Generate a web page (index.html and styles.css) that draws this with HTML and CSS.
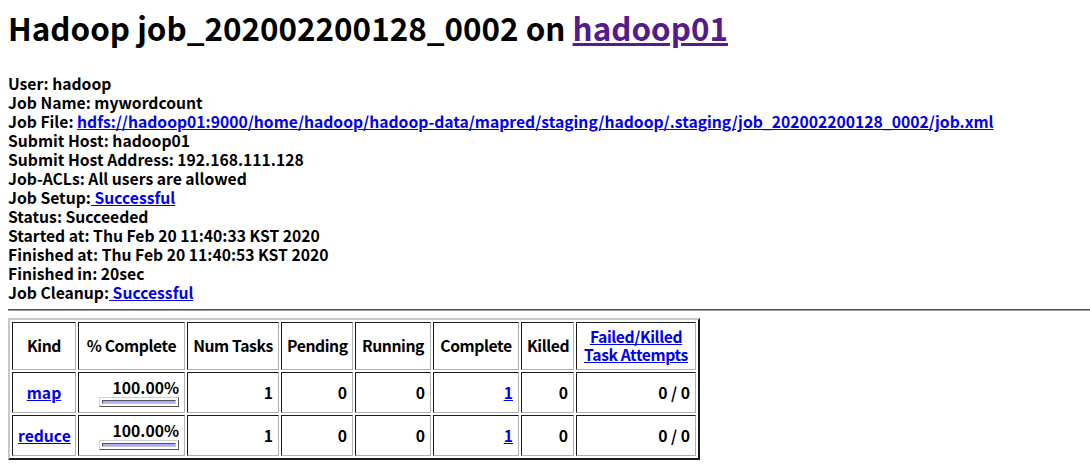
FILE: index.html
```html
<!DOCTYPE html>
<html>
<head>
<meta charset="utf-8">
<title>Hadoop job_202002200128_0002 on hadoop01</title>
<link rel="stylesheet" href="styles.css">
</head>
<body>
<div class="page">
  <h1 class="title">Hadoop job_202002200128_0002 on <a class="visited" href="#">hadoop01</a></h1>
  <div class="info">
    <div>User: hadoop</div>
    <div>Job Name: mywordcount</div>
    <div>Job File: <a href="#">hdfs://hadoop01:9000/home/hadoop/hadoop-data/mapred/staging/hadoop/.staging/job_202002200128_0002/job.xml</a></div>
    <div>Submit Host: hadoop01</div>
    <div>Submit Host Address: 192.168.111.128</div>
    <div>Job-ACLs: All users are allowed</div>
    <div>Job Setup:<a href="#"> Successful</a></div>
    <div>Status: Succeeded</div>
    <div>Started at: Thu Feb 20 11:40:33 KST 2020</div>
    <div>Finished at: Thu Feb 20 11:40:53 KST 2020</div>
    <div>Finished in: 20sec</div>
    <div>Job Cleanup:<a href="#"> Successful</a></div>
  </div>
  <hr class="rule">
  <table class="tasks">
    <thead>
      <tr>
        <th class="c-kind">Kind</th>
        <th class="c-pct">% Complete</th>
        <th class="c-num">Num Tasks</th>
        <th class="c-pend">Pending</th>
        <th class="c-run">Running</th>
        <th class="c-comp">Complete</th>
        <th class="c-kill">Killed</th>
        <th class="c-fail"><a href="#">Failed/Killed<br>Task Attempts</a></th>
      </tr>
    </thead>
    <tbody>
      <tr>
        <td class="kind"><a href="#">map</a></td>
        <td class="num"><div class="pct">100.00%</div><div class="bar"><div class="fill"></div></div></td>
        <td class="num">1</td>
        <td class="num">0</td>
        <td class="num">0</td>
        <td class="num"><a href="#">1</a></td>
        <td class="num">0</td>
        <td class="num">0 / 0</td>
      </tr>
      <tr>
        <td class="kind"><a href="#">reduce</a></td>
        <td class="num"><div class="pct">100.00%</div><div class="bar"><div class="fill"></div></div></td>
        <td class="num">1</td>
        <td class="num">0</td>
        <td class="num">0</td>
        <td class="num"><a href="#">1</a></td>
        <td class="num">0</td>
        <td class="num">0 / 0</td>
      </tr>
    </tbody>
  </table>
</div>
</body>
</html>
```
FILE: styles.css
```css
html, body {
  margin: 0;
  padding: 0;
  background: #ffffff;
}
body {
  font-family: "Noto Sans CJK KR", "Noto Sans", sans-serif;
  font-weight: 700;
  font-size: 15.7px;
  color: #000000;
}
.page {
  padding: 0 0 0 8px;
}
a {
  color: #0000ee;
  text-decoration: underline;
}
a.visited {
  color: #551a8b;
}
.title {
  font-size: 31.4px;
  line-height: 38px;
  font-weight: 700;
  margin: 9px 0 27px 0;
}
.info {
  line-height: 19px;
  white-space: nowrap;
}
.rule {
  margin: 7px 0 0 0;
  height: 0;
  border: 0;
  border-top: 1px solid #555555;
  border-bottom: 1px solid #9a9a9a;
}
.tasks {
  margin-top: 7px;
  table-layout: fixed;
  width: 692px;
  border-collapse: separate;
  border-spacing: 2px;
  border: 2px solid;
  border-color: #c8c8c8 #1a1a1a #1a1a1a #c8c8c8;
  line-height: 18px;
}
.tasks th,
.tasks td {
  padding: 5px;
  border: 1px solid;
  border-color: #1a1a1a #b0b0b0 #b0b0b0 #1a1a1a;
  vertical-align: middle;
  white-space: nowrap;
}
.tasks th {
  text-align: center;
  font-weight: 700;
  letter-spacing: -0.4px;
}
.c-kind { width: 52px; }
.c-pct { width: 95px; }
.c-num { width: 80px; }
.c-pend { width: 60px; }
.c-run { width: 64px; }
.c-comp { width: 74px; }
.c-kill { width: 41px; }
.c-fail { width: 108px; }
.tasks td.kind {
  text-align: center;
}
.tasks td.num {
  text-align: right;
}
.pct {
  line-height: 19px;
}
.bar {
  box-sizing: border-box;
  width: 80px;
  margin-left: auto;
  border: 1px solid;
  border-color: #d0d0d0 #555555 #555555 #d0d0d0;
  padding: 2px;
}
.fill {
  height: 2px;
  background: #aaaaff;
  border: 1px solid;
  border-color: #555555 #c8c8c8 #c8c8c8 #555555;
}
```
